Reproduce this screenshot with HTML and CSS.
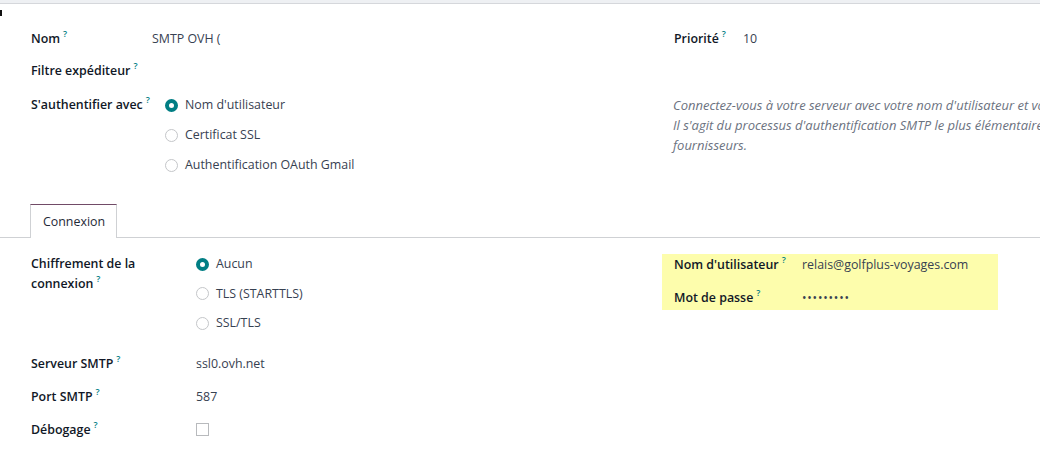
FILE: index.html
```html
<!DOCTYPE html>
<html lang="fr">
  <head>
    <meta charset="UTF-8" />
    <title>Serveur de messagerie sortant</title>
    <link rel="stylesheet" href="styles.css">
  </head>
  <body>
    <div class="topbar"></div>
    <span class="cursor-mark"></span>

    <div class="sheet">
      <!-- Top groups -->
      <div class="groups top">
        <div class="group left-top">
          <div class="row r-nom">
            <span class="label">Nom<sup>?</sup></span>
            <span class="value">SMTP OVH (</span>
          </div>
          <div class="row r-filtre">
            <span class="label">Filtre expéditeur<sup>?</sup></span>
            <span class="value"></span>
          </div>
          <div class="row">
            <span class="label">S'authentifier avec<sup>?</sup></span>
            <div class="radios auth">
              <div class="radio-opt"><span class="radio checked"></span>Nom d'utilisateur</div>
              <div class="radio-opt"><span class="radio"></span>Certificat SSL</div>
              <div class="radio-opt"><span class="radio"></span>Authentification OAuth Gmail</div>
            </div>
          </div>
        </div>

        <div class="group right-top">
          <div class="row">
            <span class="label">Priorité<sup>?</sup></span>
            <span class="value">10</span>
          </div>
          <p class="help">
            Connectez-vous à votre serveur avec votre nom d'utilisateur et votre mot de passe.<br>
            Il s'agit du processus d'authentification SMTP le plus élémentaire et peut être utilisé par certains<br>
            fournisseurs.
          </p>
        </div>
      </div>

      <!-- Notebook -->
      <div class="tabs">
        <div class="tab active">Connexion</div>
      </div>

      <div class="groups bottom">
        <div class="group left-bottom">
          <div class="row">
            <span class="label wrap">Chiffrement de la connexion<sup>?</sup></span>
            <div class="radios enc">
              <div class="radio-opt"><span class="radio checked"></span>Aucun</div>
              <div class="radio-opt"><span class="radio"></span>TLS (STARTTLS)</div>
              <div class="radio-opt"><span class="radio"></span>SSL/TLS</div>
            </div>
          </div>
          <div class="row r-serveur">
            <span class="label">Serveur SMTP<sup>?</sup></span>
            <span class="value">ssl0.ovh.net</span>
          </div>
          <div class="row r-port">
            <span class="label">Port SMTP<sup>?</sup></span>
            <span class="value">587</span>
          </div>
          <div class="row r-debug">
            <span class="label">Débogage<sup>?</sup></span>
            <span class="value"><span class="checkbox"></span></span>
          </div>
        </div>

        <div class="group right-bottom">
          <div class="highlight">
            <div class="row">
              <span class="label">Nom d'utilisateur<sup>?</sup></span>
              <span class="value">relais@golfplus-voyages.com</span>
            </div>
            <div class="row r-pass">
              <span class="label">Mot de passe<sup>?</sup></span>
              <span class="value pass">•••••••••</span>
            </div>
          </div>
        </div>
      </div>
    </div>
  </body>
</html>
```

FILE: styles.css
```css
html, body {
  margin: 0;
  padding: 0;
  overflow: hidden;
}
body {
  font-family: "Open Sans", "Noto Sans", sans-serif;
  font-size: 12.4px;
  line-height: 20px;
  color: #374151;
  background-color: #fff;
  width: 1040px;
  height: 450px;
  position: relative;
}
.topbar {
  height: 3px;
  background-color: #eef0f3;
  border-bottom: 1px solid #d5d7db;
}
/* mouse cursor leftover on the left edge */
.cursor-mark {
  position: absolute;
  left: 0;
  top: 10px;
  width: 2px;
  height: 6px;
  background-color: #111;
}
.sheet {
  width: 1310px;
}
.groups {
  display: grid;
  grid-template-columns: 643px 643px;
  padding-left: 19px;
}
.groups.top {
  padding-top: 25px;
}
.group {
  padding: 0 12px;
}
.row {
  display: grid;
  align-items: start;
}
.left-top .row {
  grid-template-columns: 121px 1fr;
}
.right-top .row {
  grid-template-columns: 69px 1fr;
}
.left-bottom .row {
  grid-template-columns: 165px 1fr;
}
.right-bottom .row {
  grid-template-columns: 128px 1fr;
}
.label {
  font-weight: 600;
  color: #111827;
  white-space: nowrap;
}
.label sup {
  font-size: 9px;
  font-weight: 600;
  color: #017e84;
  margin-left: 3px;
  vertical-align: baseline;
  position: relative;
  top: -6px;
  line-height: 0;
}
.label.wrap {
  width: 115px;
  white-space: normal;
}
.r-nom {
  margin-bottom: 12px;
}
.r-filtre {
  margin-bottom: 14px;
}
.radios {
  display: flex;
  flex-direction: column;
  gap: 10px;
}
.radios.auth {
  margin-left: 13px;
}
.radios.enc {
  margin-left: 0;
  gap: 9.5px;
}
.radio-opt {
  display: flex;
  align-items: center;
}
.radio {
  width: 13px;
  height: 13px;
  box-sizing: border-box;
  border: 1px solid #c4c6c9;
  border-radius: 50%;
  margin-right: 7px;
  background-color: #fff;
}
.radio.checked {
  border: 4px solid #017e84;
}
.help {
  margin: 46px 0 0 -1px;
  font-size: 13px;
  font-style: italic;
  color: #6b7280;
  white-space: nowrap;
}
.tabs {
  margin-top: 29px;
  border-bottom: 1px solid #cfd1d4;
  padding-left: 30px;
  display: flex;
}
.tab {
  padding: 7px 11px 6px 12px;
  border: 1px solid #cfd1d4;
  border-top: 1px solid #714b67;
  border-bottom: none;
  margin-bottom: -1px;
  background-color: #fff;
  color: #1f2937;
}
.groups.bottom {
  padding-top: 16px;
}
.r-serveur {
  margin-top: 21px;
}
.r-port,
.r-debug {
  margin-top: 13px;
}
.checkbox {
  display: inline-block;
  width: 13px;
  height: 13px;
  box-sizing: border-box;
  border: 1px solid #b8babd;
  vertical-align: middle;
  margin-top: -2px;
}
.highlight {
  background-color: #fdfdac;
  width: 336px;
  margin-left: -12px;
  padding: 1px 12px 2px;
  box-sizing: border-box;
}
.r-pass {
  margin-top: 13px;
}
.pass {
  font-size: 12px;
  letter-spacing: 0.8px;
}
```
